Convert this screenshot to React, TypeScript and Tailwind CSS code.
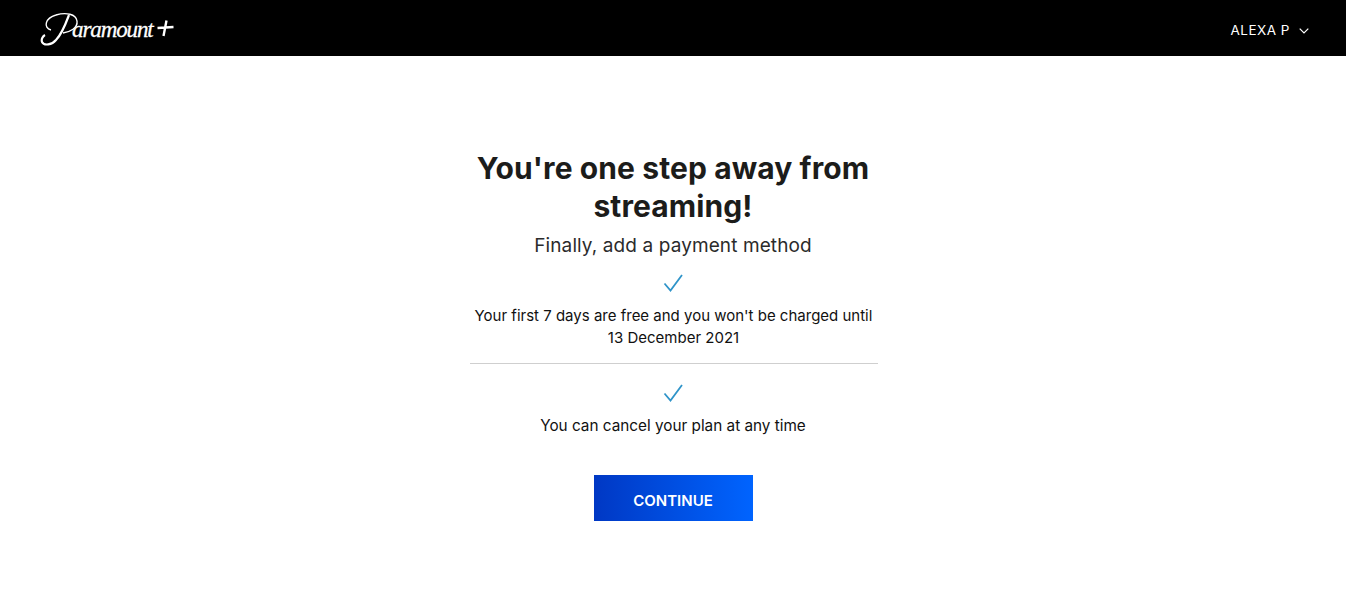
import React from "react";

const Check = () => (
  <svg width="22" height="20" viewBox="0 0 22 20" fill="none" className="block">
    <path d="M2.5 10.5 L8.5 17.5 L20 2" stroke="#2f94c9" strokeWidth="1.8" />
  </svg>
);

export default function App() {
  return (
    <div className="min-h-[609px] bg-white font-['Inter','Liberation_Sans',sans-serif]">
      <header className="h-14 bg-black flex items-center justify-between pl-10 pr-[37px]">
        <div className="relative w-[134px] h-[36px] text-white font-['Liberation_Serif',serif] italic">
          <svg width="44" height="36" viewBox="0 0 44 36" fill="none" className="absolute left-0 top-0">
            <path d="M29 5 C26 13 22 24 16 30 C12 35 4 36 2 32 C1 29 3 26 5 25" stroke="#fff" strokeWidth="2.2" />
            <path d="M11 20 C3 18 5 8 16 5 C26 2 36 4 37 11 C38 18 30 22 23 23" stroke="#fff" strokeWidth="1.4" />
          </svg>
          <span className="absolute left-[32px] top-[8px] text-[23px] leading-none tracking-[-1.1px] [-webkit-text-stroke:0.3px_white]">aramount</span>
          <svg width="17" height="17" viewBox="0 0 17 17" className="absolute left-[117px] top-[10px]">
            <path d="M9.5 0.5 L6.5 16 M0.5 8 L16.5 7" stroke="#fff" strokeWidth="2.4" />
          </svg>
        </div>
        <div className="flex items-center gap-[9px] mt-[5px] text-white text-[13.5px] tracking-[0.5px]">
          <span>ALEXA P</span>
          <svg width="10" height="6" viewBox="0 0 10 6" fill="none">
            <path d="M0.7 0.7 L5 5 L9.3 0.7" stroke="#fff" strokeWidth="1.2" />
          </svg>
        </div>
      </header>
      <main className="flex flex-col items-center pt-[93px]">
        <h1 className="w-[420px] text-center text-[30px] leading-[38px] font-bold text-[#1c1c1a] tracking-[0.1px]">
          You're one step away from streaming!
        </h1>
        <p className="mt-[9px] text-[19px] leading-6 text-[#2b2b2b] tracking-[0.1px]">Finally, add a payment method</p>
        <div className="mt-[15px]"><Check /></div>
        <div className="w-[408px] ml-px mt-[12px] pb-[14px] border-b border-[#cfcfcf] text-center text-[15px] leading-[22px] text-[#111]">
          Your first 7 days are free and you won't be charged until 13 December 2021
        </div>
        <div className="mt-[19px]"><Check /></div>
        <p className="mt-[12px] text-[15.3px] leading-[22px] text-[#111]">You can cancel your plan at any time</p>
        <button className="mt-[38px] w-[159px] h-[46px] bg-gradient-to-r from-[#0038c4] to-[#0064ff] text-white text-[15px] font-semibold pt-[6px]">
          CONTINUE
        </button>
      </main>
    </div>
  );
}
